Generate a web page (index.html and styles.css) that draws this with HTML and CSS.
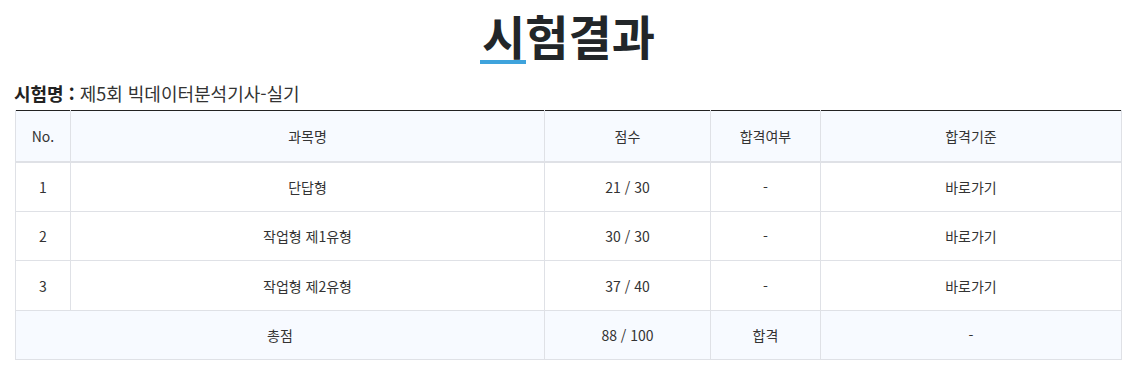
FILE: index.html
```html
<!DOCTYPE html>
<html lang="ko">
<head>
<meta charset="utf-8">
<link rel="stylesheet" href="styles.css">
</head>
<body>
<div class="page">
  <h1 class="title"><span class="first">시</span>험결과</h1>
  <div class="exam"><b>시험명 :</b> 제5회 빅데이터분석기사-실기</div>
  <table class="result">
    <colgroup>
      <col class="c1"><col class="c2"><col class="c3"><col class="c4"><col class="c5">
    </colgroup>
    <thead>
      <tr><th>No.</th><th>과목명</th><th>점수</th><th>합격여부</th><th>합격기준</th></tr>
    </thead>
    <tbody>
      <tr class="tall"><td>1</td><td>단답형</td><td>21 / 30</td><td>-</td><td><a class="link">바로가기</a></td></tr>
      <tr><td>2</td><td>작업형 제1유형</td><td>30 / 30</td><td>-</td><td><a class="link">바로가기</a></td></tr>
      <tr class="tall"><td>3</td><td>작업형 제2유형</td><td>37 / 40</td><td>-</td><td><a class="link">바로가기</a></td></tr>
      <tr class="total"><td colspan="2">총점</td><td>88 / 100</td><td>합격</td><td>-</td></tr>
    </tbody>
  </table>
</div>
</body>
</html>
```
FILE: styles.css
```css
* { box-sizing: border-box; }
body {
  margin: 0;
  font-family: "Noto Sans CJK KR", "Noto Sans", sans-serif;
  color: #333;
  background: #fff;
}
.page {
  padding: 0 11px 0 15px;
}
.title {
  margin: 0;
  height: 70px;
  overflow: visible;
  text-align: center;
  font-size: 47px;
  font-weight: 700;
  line-height: normal;
  color: #222629;
}
.first {
  position: relative;
}
.first::after {
  content: "";
  position: absolute;
  left: -2px;
  right: -1px;
  top: 60px;
  height: 4px;
  background: #3ea3dc;
}
.exam {
  margin-left: -1px;
  font-size: 18px;
  line-height: 24px;
  height: 40px;
  padding-top: 11px;
  color: #333;
}
.exam b { color: #222; }
.result {
  width: 100%;
  border-collapse: collapse;
  border-top: 1px solid #222;
  font-size: 14px;
  table-layout: fixed;
}
.c1 { width: 55px; }
.c2 { width: 474px; }
.c3 { width: 166px; }
.c4 { width: 110px; }
.c5 { width: auto; }
.result th, .result td {
  border: 1px solid #dfe1e6;
  text-align: center;
  font-weight: 400;
  height: 49px;
  padding: 0;
}
.result tr.tall td { height: 50px; }
.result thead th {
  background: #f7faff;
  border-top: 0;
  border-bottom: 2px solid #dfe1e6;
  height: 51px;
}
.result tr.total td { background: #f7faff; }
.link { color: #333; text-decoration: none; }
```
